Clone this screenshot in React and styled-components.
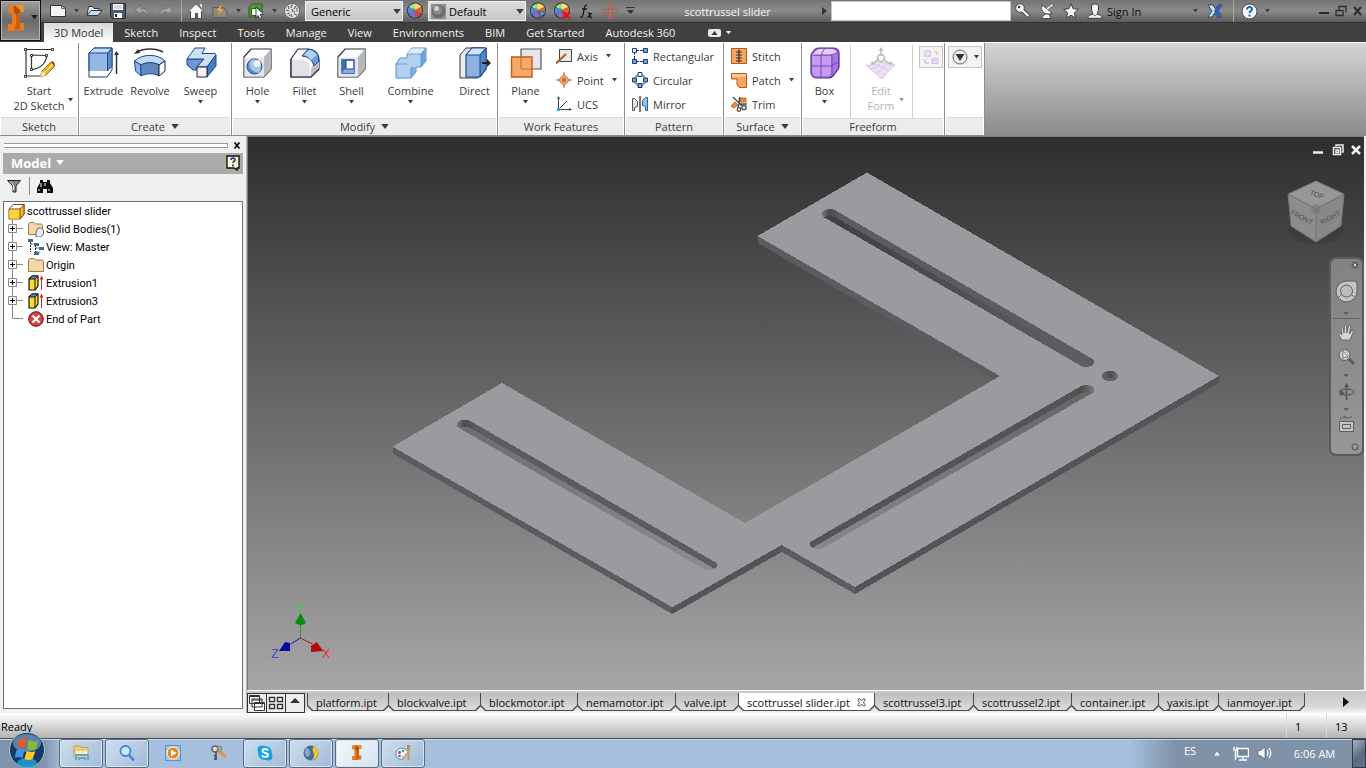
import React, {useState} from 'react'
import styled, {createGlobalStyle, css} from 'styled-components'

const GlobalStyle = createGlobalStyle`
	* { box-sizing: border-box; }
	body{
		margin: 0;
		background: #f0f0f0;
	}
	body, button, input, select{
		font-family: "Open Sans", "Noto Sans", sans-serif;
		font-size: 11px;
	}
	button{
		border: none;
		background: none;
		padding: 0;
		color: inherit;
	}
	svg{
		display: block;
		flex: none;
	}
`

const Page = styled.div`
	min-height: 100vh;
	display: flex;
	flex-direction: column;
`

/* ---------- header ---------- */

const Header = styled.header`
	display: grid;
	grid-template-columns: 41px 1fr;
	background: #404040;
`

const AppButton = styled.button`
	display: flex;
	align-items: center;
	justify-content: center;
	gap: 6px;
	height: 41px;
	padding: 0 0 6px 4px;
	background: linear-gradient(#a0a0a0, #6a6a6a 50%, #8c8c8c);
	border: 1px solid #111;
	box-shadow: inset 0 0 0 1px #b4b4b4;
`

const TitleBar = styled.div`
	height: 23px;
	display: flex;
	align-items: center;
	background: linear-gradient(#747474, #8a8a8a 50%, #5c5c5c);
	border-bottom: 1px solid #333;
`

const Tool = styled.button`
	width: ${p => p.$w || 24}px;
	height: 22px;
	flex: none;
	display: flex;
	align-items: center;
	justify-content: center;
`

const Spacer = styled.span`
	width: ${p => p.$w}px;
	flex: none;
`

const Divider = styled.span`
	width: ${p => p.$w || 6}px;
	height: 22px;
	flex: none;
	background: linear-gradient(#a5a5a5, #a5a5a5) no-repeat center / 1px 100%;
`

const PickBox = styled.label`
	width: 98px;
	height: 20px;
	margin-left: 1px;
	flex: none;
	display: flex;
	align-items: center;
	padding: 0 1px 0 2px;
	background: linear-gradient(#dcdcdc, #c6c6c6);
	border: 1px solid #efefef;
	select{
		flex: 1;
		min-width: 0;
		appearance: none;
		border: none;
		background: none;
		padding: 0 3px;
		color: #000;
	}
`

const DocTitle = styled.h1`
	flex: 1;
	margin: 0;
	text-align: center;
	font-size: 11px;
	font-weight: 400;
	color: #f4f4f4;
	white-space: nowrap;
`

const Search = styled.input`
	width: 180px;
	height: 20px;
	flex: none;
	border: 1px solid #b8c4d0;
	background: #fff;
	padding: 0 4px;
`

const SignIn = styled.button`
	width: 82px;
	text-align: left;
	color: #0c0c0c;
`

const WindowButtons = styled.div`
	display: flex;
	margin-left: 42px;
`

const MenuBar = styled.nav`
	height: 19px;
	display: flex;
	align-items: stretch;
	gap: 1px;
	padding-left: 3px;
`

const MenuTab = styled.button`
	padding: 0 10px;
	line-height: 18px;
	white-space: nowrap;
	color: #f2f2f2;
	${p => p.$active && css`
		background: linear-gradient(#d8d8d8, #fff);
		color: #333;
	`}
`

const MenuEnd = styled.button`
	display: flex;
	align-items: center;
	gap: 5px;
	padding-left: 22px;
`

/* ---------- ribbon ---------- */

const Ribbon = styled.section`
	display: flex;
	height: 94px;
	background: linear-gradient(#d4d4d4, #8b8b8b);
	border-top: 1px solid #fff;
	border-bottom: 1px solid #8a8a8a;
`

const Panel = styled.div`
	width: ${p => p.$w}px;
	flex: none;
	display: flex;
	flex-direction: column;
	background: #fff;
	border-right: 1px solid #8e8e8e;
`

const PanelBody = styled.div`
	flex: 1;
	display: flex;
	align-items: flex-start;
	padding: 2px 0 0 ${p => p.$pad || 0}px;
`

const PanelTitle = styled.div`
	height: 18px;
	margin: 0 1px;
	display: flex;
	align-items: center;
	justify-content: center;
	gap: 6px;
	background: #ececec;
	border-top: 1px solid #dadada;
	color: #3c3c3c;
	padding-bottom: 1px;
`

const BigTool = styled.button`
	width: ${p => p.$w}px;
	flex: none;
	display: flex;
	flex-direction: column;
	align-items: center;
	color: ${p => p.$off ? '#b4b4b4' : '#3a3a3a'};
	line-height: 15px;
	padding-top: 2px;
	white-space: nowrap;
	position: relative;
	> svg + span { margin-top: 4px; }
	> span + svg { margin-top: 2px; }
`

const SideCaret = styled.i`
	position: absolute;
	right: 5px;
	top: 53px;
`

const Rule = styled.span`
	width: 1px;
	height: 73px;
	margin: 0 ${p => p.$r}px 0 ${p => p.$l}px;
	background: #d0d0d0;
`

const SmallTools = styled.div`
	display: flex;
	flex-direction: column;
	align-items: flex-start;
	margin-left: ${p => p.$l}px;
`

const SmallTool = styled.button`
	height: 24px;
	display: flex;
	align-items: center;
	gap: 5px;
	padding-bottom: 2px;
	color: #3a3a3a;
	> span + svg { margin-left: 3px; }
`

const BoxedTool = styled.button`
	width: ${p => p.$w}px;
	height: 22px;
	margin: 1px 0 0 ${p => p.$l}px;
	display: flex;
	align-items: center;
	justify-content: center;
	gap: 6px;
	background: #f3f3f3;
	border: 1px solid #c4c4c4;
`

/* ---------- browser panel ---------- */

const Workspace = styled.main`
	flex: 1;
	display: flex;
	min-height: 0;
`

const Browser = styled.aside`
	width: 247px;
	flex: none;
	display: flex;
	flex-direction: column;
	padding: 0 3px 4px;
	background: #f0f0f0;
	border-right: 1px solid #b8b8b8;
`

const Grip = styled.div`
	height: 17px;
	display: flex;
	align-items: center;
	gap: 5px;
	padding: 2px 1px 0;
	span{
		flex: 1;
		height: 5px;
		border: solid #999;
		border-width: 1px 1px 1px 0;
		background: #fff;
	}
`

const BrowserHead = styled.div`
	width: 240px;
	height: 21px;
	display: flex;
	align-items: center;
	background: #ababab;
	color: #fff;
	padding: 0 3px 2px 8px;
	h2{
		margin: 0 5px 0 0;
		font-size: 13px;
		font-weight: 700;
	}
	> :last-child { margin-left: auto; }
`

const BrowserTools = styled.div`
	height: 27px;
	display: flex;
	align-items: center;
	gap: 7px;
	padding: 0 3px 3px;
`

const ToolRule = styled.span`
	width: 1px;
	height: 18px;
	background: #8c8c8c;
`

const Tree = styled.ul`
	flex: 1;
	width: 240px;
	margin: 0;
	padding: 0 0 0 4px;
	list-style: none;
	background: #fff;
	border: 1px solid #6e6e6e;
`

const Node = styled.li`
	height: 18px;
	display: flex;
	align-items: center;
	gap: 2px;
	white-space: nowrap;
	font-family: Roboto, "Open Sans", sans-serif;
	color: #000;
`

/* ---------- viewport ---------- */

const Stage = styled.section`
	flex: 1;
	min-width: 0;
	display: flex;
	flex-direction: column;
`

const Viewport = styled.div`
	flex: 1;
	position: relative;
	border: solid #7c7c7c;
	border-width: 1px 0 0 1px;
	margin-right: 2px;
	background: linear-gradient(#2e2e2e, #a6a6a6);
	> svg { width: 100%; height: 100%; }
`

const Overlay = styled.div`
	position: absolute;
	top: ${p => p.$top}px;
	right: ${p => p.$right}px;
	display: flex;
`

const NavBar = styled.div`
	position: absolute;
	top: 120px;
	right: 0;
	width: 35px;
	height: 199px;
	border: 2px solid #5a5a5a;
	border-radius: 7px;
	background: linear-gradient(#828282, #979797);
	display: flex;
	justify-content: center;
`

const DocTabs = styled.div`
	height: 23px;
	display: flex;
	align-items: flex-start;
	padding: 2px 0 0;
	background: linear-gradient(#c8c8c8, #d8d8d8 70%, #f4f4f4);
	border-top: 1px solid #fff;
`

const ViewButton = styled.button`
	width: 20px;
	height: 20px;
	margin-right: -1px;
	flex: none;
	display: flex;
	align-items: center;
	justify-content: center;
	background: #ececec;
	border: 1px solid #333;
`

const chamfer = 'polygon(0 0, 100% 0, 100% calc(100% - 5px), calc(100% - 5px) 100%, 5px 100%, 0 calc(100% - 5px))'

const DocTab = styled.button`
	position: relative;
	height: 18px;
	width: ${p => p.$w}px;
	padding: 0 9px;
	flex: none;
	white-space: nowrap;
	color: #111;
	background: #4c4c4c;
	clip-path: ${chamfer};
	margin-right: -1px;
	display: flex;
	align-items: center;
	justify-content: space-between;
	&::before{
		content: '';
		position: absolute;
		inset: 0 1px 1px;
		clip-path: ${chamfer};
		background: ${p => p.$active ? '#fff' : 'linear-gradient(#bdbdbd, #dcdcdc)'};
	}
	> * { position: relative; }
`

const TabScroll = styled.button`
	margin-left: auto;
	width: 40px;
	height: 18px;
	display: flex;
	align-items: center;
	justify-content: center;
`

/* ---------- bottom bars ---------- */

const StatusBar = styled.footer`
	height: 25px;
	display: flex;
	align-items: stretch;
	line-height: 27px;
	padding-left: 1px;
	color: #000;
	background: linear-gradient(#fff, #b2b2b2);
	span:first-child { flex: 1; }
`

const StatusCell = styled.span`
	width: 40px;
	padding-left: 8px;
	border-left: 1px solid #d8d8d8;
`

const TaskBar = styled.footer`
	height: 30px;
	display: flex;
	align-items: stretch;
	border-top: 1px solid #44525f;
	background: linear-gradient(90deg, #7f93ab 44px, #a5bfdc 62px, #a5bfdc calc(100% - 236px), #8092a8 calc(100% - 190px));
	box-shadow: inset 0 1px 0 #c9d8e8;
`

const StartButton = styled.button`
	width: 59px;
	padding-left: 9px;
	display: flex;
	align-items: flex-end;
	svg { margin-top: -6px; }
`

const TaskButton = styled.button`
	width: 44px;
	height: 29px;
	margin-right: 2px;
	padding-bottom: 2px;
	display: flex;
	align-items: center;
	justify-content: center;
	border-radius: 3px;
	${p => p.$open && css`
		border: 1px solid #566c85;
		box-shadow: inset 0 0 0 1px #d9e5f1;
		background: linear-gradient(135deg, #cfdeed, #a2bbd8);
	`}
	${p => p.$active && css`
		background: linear-gradient(135deg, #f4f8fb, #d4e2f0);
	`}
`

const Tray = styled.div`
	margin-left: auto;
	display: flex;
	align-items: center;
	padding-bottom: 1px;
	color: #fff;
`

const TrayText = styled.span`
	width: ${p => p.$w}px;
	text-align: center;
	${p => p.$up && css`padding-bottom: 6px;`}
`

const ShowDesktop = styled.button`
	width: 14px;
	height: 29px;
	border: 1px solid #2c3a49;
	background: linear-gradient(135deg, #a5b4c4, #56697e 60%, #66798f);
`

/* ---------- icons ---------- */

const Ico = ({w = 16, h = w, vb, children}) => (
	<svg width={w} height={h} viewBox={vb || `0 0 ${w} ${h}`} fill='none' aria-hidden='true'>{children}</svg>
)

const Caret = ({w = 5, c = '#3c3c3c'}) => (
	<Ico w={w} h={w / 2 + 1} vb='0 0 6 4'><path d='M0 0h6L3 4z' fill={c} /></Ico>
)

const Wheel = ({extra}) => (
	<Ico w={18} h={18}>
		<circle cx='9' cy='8.5' r='8' fill='#1c2130' />
		<path d='M9 8.5L9 1.2A7.3 7.3 0 0 1 15.3 4.9z' fill='#f0c530' />
		<path d='M9 8.5L15.3 4.9A7.3 7.3 0 0 1 15.3 12.1z' fill='#e0632b' />
		<path d='M9 8.5L15.3 12.1A7.3 7.3 0 0 1 9 15.8z' fill='#c94458' />
		<path d='M9 8.5V15.8A7.3 7.3 0 0 1 2.7 12.1z' fill='#7f70cf' />
		<path d='M9 8.5L2.7 12.1A7.3 7.3 0 0 1 2.7 4.9z' fill='#4d8fd6' />
		<path d='M9 8.5L2.7 4.9A7.3 7.3 0 0 1 9 1.2z' fill='#6fb850' />
		<path d='M3 5Q9 -1 15 5Q9 8 3 5' fill='#fff' opacity='.45' />
		{extra}
	</Ico>
)

const Letter = ({s = 26}) => (
	<Ico w={Math.round(s * .65)} h={s} vb='0 0 17 26'>
		<path d='M0 1l6-1h10v7h-4v11h4v7l-10 1H0v-7h4V8H0z' fill='#ea7a1e' />
		<path d='M6 0h10v7H6z' fill='#f08c30' />
		<path d='M8 7h4v11l-4 2z' fill='#c4620f' />
		<path d='M6 0l6 5v2l-4 3-2-3z' fill='#a3500e' />
		<path d='M8 19l4-1v6l-6 2z' fill='#c4620f' />
	</Ico>
)

const NewIcon = () => <Ico><path d='M.5 2.5h11l4 3v8H.5z' fill='#f4f4f4' stroke='#333' /><path d='M11.5 2.5v3h4' stroke='#666' /></Ico>
const OpenIcon = () => <Ico w={17} h={16}><path d='M1 12.5L2.5 3.5h4l1.5 2h5v2' fill='#e4ebf1' stroke='#333' /><path d='M1 12.5l4-5h11l-4 5z' fill='#c9d9e6' stroke='#2d3b48' /></Ico>
const SaveIcon = () => <Ico><path d='M.5.5h15v15h-13l-2-2z' fill='#4a5c6c' stroke='#222e38' /><path d='M3 1h10v6H3zM4 10h8v5H4z' fill='#fff' /><path d='M5 11h2v3H5z' fill='#222' /><path d='M4 3h8M4 5h8' stroke='#aab' /></Ico>
const UndoIcon = () => <Ico><path d='M1 7l6-5v3.5c5 0 8 2 7 8C12.5 9.5 11 9 7 9v3z' fill='#a4a4a4' stroke='#5e5e5e' strokeWidth='.6' /></Ico>
const RedoIcon = () => <Ico><path d='M15 7L9 2v3.5c-5 0-8 2-7 8C3.5 9.5 5 9 9 9v3z' fill='#a4a4a4' stroke='#5e5e5e' strokeWidth='.6' /></Ico>
const HomeIcon = () => <Ico><path d='M.5 8L8 .8 15.5 8l-1.2 1-.8-.7v7.2h-11V8.3L1.7 9z' fill='#fafafa' stroke='#333' strokeWidth='.8' /><path d='M7 10h3v5H7z' fill='#555' /><path d='M12 1h2v4l-2-2z' fill='#ddd' /></Ico>
const BoltIcon = () => <Ico><path d='M1 4.5h10l4 3v7H1z' fill='#8f8a84' stroke='#5a5a5a' /><path d='M11 0L3 8h4l-3 6 9-8H9z' fill='#d9ab63' stroke='#8f713f' strokeWidth='.7' /></Ico>
const CubeCursorIcon = () => <Ico><path d='M1 4l3-3h10v9l-3 4H1z' fill='#4f9a34' stroke='#2c5f1c' /><path d='M3.5 5.5h8v7h-8z' fill='#f4f8f2' stroke='#2c5f1c' /><path d='M8 4v11l2-2.5 2 3.5 2-1-2-3.5 3.5-.5z' fill='#fff' stroke='#222' strokeWidth='.8' /></Ico>
const SphereMesh = () => <Ico><circle cx='8' cy='8' r='7.5' fill='#e2e2e2' stroke='#444' strokeWidth='.6' /><path d='M4 3l1 3M8 1.5L7 5M12 3l-2 3M2 7l3 1M8 6l1 3M12 7l2 1M3 11l3-1M7 11l1 3M10 11l3 1M11 9.5l-1-1M5 13l1-1M13.5 5L12 5.5' stroke='#666' strokeWidth='1.3' /></Ico>
const BallIcon = () => <Ico w={15}><path d='M0 0h15v15H0z' fill='#8f8f8f' /><circle cx='7.5' cy='7.5' r='6.8' fill='#6d6d6d' /><circle cx='6.5' cy='6' r='4.5' fill='#8a8a8a' /><circle cx='5.5' cy='4.5' r='2.5' fill='#d0d0d0' /></Ico>
const PlusIcon = () => <Ico><path d='M6.5.5h3v6h6v3h-6v6h-3v-6h-6v-3h6z' fill='#92807c' stroke='#b8604f' strokeWidth='1.2' /></Ico>
const KeyIcon = () => <Ico><circle cx='5' cy='5' r='4.3' fill='#f5f5f5' stroke='#333' strokeWidth='.8' /><circle cx='4' cy='4' r='1.3' fill='#444' /><path d='M7.5 7.5l6.5 6' stroke='#333' strokeWidth='4' /><path d='M7 7l6.5 6.2' stroke='#f5f5f5' strokeWidth='2.4' /></Ico>
const DishIcon = () => <Ico><path d='M3 2c-2 7 4 11 10 8z' fill='#fff' stroke='#333' strokeWidth='.8' /><path d='M8 6l5-4' stroke='#fff' strokeWidth='1.5' /><circle cx='12.5' cy='2.5' r='1.5' fill='#fff' stroke='#333' strokeWidth='.5' /><path d='M6 11l-4 4.5h10l-2-4.5z' fill='#f2f2f2' stroke='#333' strokeWidth='.8' /></Ico>
const StarIcon = () => <Ico><path d='M8 .8l2.1 5 5.2.4-4 3.5 1.3 5.3L8 12.2 3.4 15l1.3-5.3-4-3.5 5.2-.4z' fill='#fafafa' stroke='#333' strokeWidth='.9' /></Ico>
const UserIcon = () => <Ico><path d='M1 15.3c0-3 2-3.3 5-4L4.5 7V4C4.5 0 11.5 0 11.5 4v3L10 11.3c3 .7 5 1 5 4z' fill='#f4f4f4' stroke='#333' strokeWidth='.9' /><path d='M5.5 11l2.5 2 2.5-2' stroke='#777' /></Ico>
const ExchangeIcon = () => <Ico><path d='M1 2h5l2.5 4L11 2h4l-4 6 4 6h-5L7.5 10 5 14H1l4-6z' fill='#cfe0f2' stroke='#1d3c6e' strokeWidth='.9' /><path d='M11 2h4l-4 6 4 6h-5L7 8z' fill='#2f62a8' /></Ico>
const HelpIcon = () => <Ico w={17}><circle cx='8.5' cy='8.5' r='7.5' fill='#f6f6f6' stroke='#444' /><path d='M6 6.5c0-3.5 5.5-3.2 5 0-.3 1.6-2.5 1.6-2.5 3.5M8.5 11.5v2' stroke='#1c64b8' strokeWidth='2' /></Ico>

const SketchIcon = () => (
	<Ico w={32}>
		<path d='M28 2.5H3V29h14M8.5 8v14.5C17 22 23.5 16 23.5 8.5z' stroke='#333' strokeWidth='1.2' />
		<g fill='#fff' stroke='#333'><path d='M1.5 1.5h2v2h-2zM28.5 1.5h2v2h-2zM1.5 28.5h2v2h-2zM7.5 7.5h2v2h-2zM22.5 7.5h2v2h-2zM7.5 21.5h2v2h-2z' /></g>
		<path d='M17 30l2-6 9-9 4 4-9 9z' fill='#f0b429' stroke='#7c5310' strokeWidth='.8' />
		<path d='M28 15l2-1 2 3-1 2z' fill='#c0392b' /><path d='M17 30l2-6 4 4z' fill='#f7e4c0' /><path d='M21 26l9-9' stroke='#fff3b0' />
	</Ico>
)
const ExtrudeIcon = () => (
	<Ico w={32}>
		<path d='M1 6l5-5h18v22l-5 7H1z' fill='#fff' stroke='#1b3461' />
		<path d='M1.5 6h18v18h-18z' fill='#93b8e2' /><path d='M1.5 6L6 1.5h17.5L19.5 6z' fill='#c6dbf2' /><path d='M19.5 6l4-4.5V19l-4 5z' fill='#5f88be' />
		<path d='M1 24V6l5-5h18v18l-4.5 5V6M1 6h18.5L24 1' stroke='#1846a0' />
		<path d='M28.5 27V5' stroke='#333' strokeWidth='1.5' /><path d='M26 8l2.5-4L31 8z' fill='#333' />
	</Ico>
)
const RevolveIcon = () => (
	<Ico w={32}>
		<path d='M29 5C22 1 10 1 3 5' stroke='#333' strokeWidth='1.5' /><path d='M0 7l4-5 2 4z' fill='#333' />
		<path d='M.5 14C8 6.5 24 6.5 31 14l-6 4c-5-3-13-3-18 0z' fill='#c3daf2' stroke='#1846a0' />
		<path d='M.5 14L7 18v11L1.5 24z' fill='#8fb2dc' stroke='#1846a0' />
		<path d='M7 18c5-3 13-3 18 0v11c-5-3-13-3-18 0z' fill='#6189bf' stroke='#1846a0' />
		<path d='M25 18l6-4v10l-6 5z' fill='#fff' stroke='#222' />
	</Ico>
)
const SweepIcon = () => (
	<Ico w={32}>
		<path d='M2 12h17l-7 8v3H8l-6-5z' fill='#6f97cb' stroke='#1846a0' />
		<path d='M10 1h10l-3 5.5h13L31 8 22 20H12l7-8H2z' fill='#cfe0f4' stroke='#1846a0' />
		<path d='M31 8v11l-9 11V20z' fill='#4f7ab4' stroke='#1846a0' />
		<path d='M12 20h10v10H12z' fill='#f2f2f2' stroke='#223' />
	</Ico>
)
const Block = ({children}) => (
	<Ico w={32}>
		<path d='M2 10l7-8h20v20l-7 8H2z' fill='#fff' stroke='#2a3140' strokeWidth='1.2' />
		<path d='M2.5 10.5H22v19H2.5z' fill='#e6e6e6' /><path d='M22 10l7-8v20l-7 8z' fill='#b8b8bb' />
		{children}
	</Ico>
)
const HoleIcon = () => <Block><circle cx='12.5' cy='19.5' r='7.5' fill='#5f8cc6' stroke='#1846a0' /><path d='M8 14c-2 6 2 11 8 12 5-3 4-11-1-13-3-1-5-.5-7 1' fill='#a3c5ea' /><circle cx='15' cy='16.5' r='3.5' fill='#eef5fc' /></Block>
const FilletIcon = () => (
	<Ico w={32}>
		<path d='M2 12L9 2h10q11 1 11 12v8l-8 8H2z' fill='#fff' stroke='#2a3140' strokeWidth='1.2' />
		<path d='M2.5 12.5H11Q21.5 13 21.5 23v6.500h-19z' fill='#e3e3e3' />
		<path d='M24 18l6-5v9l-8 8v-8z' fill='#c0c0c4' />
		<path d='M13 9l6-7q11 1 11 12l-5 5q-2-9-12-10z' fill='#6f9cd8' stroke='#1846a0' /><path d='M15 8l5-5q5 .5 8 5l-6 5q-3-4-7-5z' fill='#b4d0ef' />
		<path d='M2 12V30H22l8-8' stroke='#2a3140' strokeWidth='1.2' />
	</Ico>
)
const ShellIcon = () => <Block><path d='M6 13h12v13H6z' fill='#fff' stroke='#1846a0' strokeWidth='1.3' /><path d='M6 13h4v9l-4 4z' fill='#456fad' /><path d='M10 22h8v4H6z' fill='#85aee0' /><path d='M10 13v9h8' stroke='#1846a0' /></Block>
const CombineIcon = () => (
	<Ico w={32}>
		<path d='M1 17l4-6h7V7l5-6h14v13l-5 6h-5v5l-5 6H1z' fill='#b2d0f0' stroke='#5b8fcd' />
		<path d='M26 7l4.5-5.5V14L26 19.5z' fill='#6f9ed8' /><path d='M12 7l5-5.5h13L26 7z' fill='#ddecfa' /><path d='M16 20h5v5l-5 5.5z' fill='#7fa9dc' />
		<path d='M12 7h14v13M26 7l5-6M1 17h11M16 20v11' stroke='#5b8fcd' strokeWidth='.8' />
	</Ico>
)
const DirectIcon = () => (
	<Ico w={32}>
		<path d='M1 8l6-7h18v22l-6 8H1z' fill='#e8edf4' stroke='#333' />
		<path d='M7 8l6-7h14v21l-6 8H7z' fill='#8db2e0' stroke='#1846a0' strokeWidth='1.2' /><path d='M7 8l6-7h14l-6 7z' fill='#d3e4f6' stroke='#1846a0' /><path d='M21 8l6-7v21l-6 8z' fill='#5d87bf' stroke='#1846a0' />
		<path d='M23 16h6' stroke='#222' strokeWidth='2' /><path d='M28 12l4 4-4 4z' fill='#222' />
	</Ico>
)
const PlaneIcon = () => (
	<Ico w={32}>
		<path d='M11 2h20v20H11z' fill='#e6e6ea' stroke='#555' strokeWidth='1.2' />
		<path d='M1.5 10H22v20H1.5z' fill='#f9a866' stroke='#c15a15' strokeWidth='1.4' /><path d='M11 10v12h11' stroke='#9b7a62' />
	</Ico>
)
const BoxIcon = () => (
	<Ico w={32}>
		<path d='M10 1h14q6 0 6 5v14q0 2-3 5l-3 4q-2 2-5 2H8q-5 0-6-5V9q0-3 2-4 2-4 6-4z' fill='#a873e4' stroke='#4c2a86' strokeWidth='1.2' />
		<path d='M4 8q2-5 7-6h12q4 1 5 4-3 2-5 2H4z' fill='#e3cdfa' /><path d='M3 9h19v16q0 4-4 4H8q-5 0-5-4z' fill='#c49af4' />
		<path d='M12 30V10q0-4 4-9M3 19h19l7-4M23 8v20M5 8h16q6-1 8-3' stroke='#6a45a8' strokeWidth='.9' />
	</Ico>
)
const EditFormIcon = () => (
	<Ico w={32}>
		<path d='M1 18q6 2 10-5 8 3 16 3l3 2q-6 4-13 14Q10 26 1 18z' fill='#ecdff8' stroke='#d6c6e6' /><path d='M6 22q7-1 12-8M11 27q6-3 11-11M5 15q9 3 18 9' stroke='#d6c6e6' />
		<circle cx='16' cy='11' r='3.5' stroke='#bbb' strokeWidth='1.5' fill='#fff' /><path d='M16 1v8M14 12l-6 5M18 12l7 5' stroke='#bbb' strokeWidth='1.4' /><path d='M13.5 4L16 0l2.500 4zM6 18l1-4 3 3zM27 18l-1-4-3 3z' fill='#bbb' />
	</Ico>
)

const AxisIcon = () => <Ico><path d='M3.5 1.5h12v12h-12z' fill='#e8e8ea' stroke='#444' /><path d='M0 15.5L10 6' stroke='#b85a1e' strokeWidth='2' /></Ico>
const PointIcon = () => <Ico><path d='M8 0v16M0 8h16' stroke='#b8561c' /><path d='M8 2.5L13.5 8 8 13.5 2.5 8z' fill='#f8b57c' stroke='#b8561c' /><circle cx='8' cy='8' r='2' fill='#fff' stroke='#b8561c' /><circle cx='8' cy='8' r='.9' fill='#333' /></Ico>
const UcsIcon = () => <Ico><path d='M2.5 1v12.5H15M2.5 13.5L11 5' stroke='#444' /><path d='M1 3l1.5-3L4 3zM13 12l3 1.5-3 1.5z' fill='#444' /><path d='M1 12h3v3H1z' fill='#2ca0dc' /></Ico>
const RectIcon = () => <Ico><path d='M4 2.5h8M2.5 4v8M4 13.5h8' stroke='#333' strokeDasharray='3 1' /><path d='M.5.5h4v4h-4z' fill='#fff' stroke='#1b3a85' /><path d='M11.5.5h4v4h-4zM.5 11.5h4v4h-4zM11.5 11.5h4v4h-4z' fill='#6da4e0' stroke='#1b3a85' /></Ico>
const CircIcon = () => <Ico><circle cx='8' cy='8' r='5.5' stroke='#333' /><path d='M6 .5h4v4H6z' fill='#fff' stroke='#1b3a85' /><path d='M.5 6h4v4h-4zM11.5 6h4v4h-4zM6 11.5h4v4H6z' fill='#6da4e0' stroke='#1b3a85' /></Ico>
const MirrorIcon = () => <Ico><path d='M.5 2.5h2l3 3v5l-3 1v3h-2z' fill='#e6e6e6' stroke='#555' /><path d='M15.5 1.5h-2l-3 3v5l3 1v4h2z' fill='#8fc6ea' stroke='#1c6ba6' /><path d='M8 0v16' stroke='#222' strokeWidth='1.2' /></Ico>
const StitchIcon = () => <Ico><path d='M.5.5h15v15H.5z' fill='#f8a55e' stroke='#b8561c' /><path d='M8 .5v15' stroke='#b8561c' /><path d='M5 4h6M5 7h6M5 10h6M5 13h6M8 2v12' stroke='#333' /></Ico>
const PatchIcon = () => <Ico><path d='M.5 1.5h15v14H8l-2-3V7H.5z' fill='#f8a55e' stroke='#b8561c' /><path d='M1 2h14v3H1z' fill='#fbc797' /></Ico>
const TrimIcon = () => <Ico><path d='M0 10l4-4 3 3-4 3zM8 6V2h7v4z' fill='#f0873a' stroke='#b8561c' strokeWidth='.8' /><path d='M2 1l9 9M9 1L8 8l-1 4M9 8h7' stroke='#4c4c54' strokeWidth='1.3' /><circle cx='13' cy='11.5' r='2.2' fill='#fff' stroke='#4c4c54' strokeWidth='1.3' /><circle cx='8' cy='13.5' r='1.8' fill='#fff' stroke='#4c4c54' strokeWidth='1.3' /></Ico>
const ConvertIcon = () => <Ico><g stroke='#d3bfe8'><circle cx='4.5' cy='4.5' r='3.5' /><path d='M1 3.5h7M1 6h7' /><path d='M9 9.5h6v5H9zM9 11q3 2 6 0' fill='#ecdff8' /></g><path d='M14 6V3h-3M2 10v4h4' stroke='#bbb' /></Ico>
const DownDisc = () => <Ico><circle cx='8' cy='8' r='7' fill='#eee' stroke='#666' /><path d='M3.5 5h9L8 12z' fill='#333' /></Ico>

/* ---------- tree icons ---------- */

const PartIcon = () => <Ico w={17}><path d='M1 6l4-4.5h11V11l-4 5H1z' fill='#fff' stroke='#8f3a10' /><path d='M1.5 6.5h10v9h-10z' fill='#fbd92c' /><path d='M12 6l4-4.5V11l-4 5z' fill='#f0c41f' stroke='#8f3a10' /><path d='M1 6h11' stroke='#8f3a10' /></Ico>
const FolderIcon = () => <Ico><path d='M.5 14.5V3L2 1.5h4L7.5 3h7l1 1.5v10z' fill='#f3d9a6' stroke='#9c7a48' /></Ico>
const BodiesIcon = () => <Ico><path d='M.5 13.5V3L2 1.5h4L7.5 3h6l1 1.5v9z' fill='#f3d9a6' stroke='#9c7a48' /><path d='M10 7h3.5l2 2v4l-3 3H8v-5z' fill='#e8ecf0' stroke='#666' /></Ico>
const ViewIcon = () => <Ico><path d='M2.5 3v10M2.5 5h5M7.5 6v8M7.5 9h4M7.5 13h4' stroke='#222' strokeDasharray='2 1' /><path d='M0 0h5v3H0zM6 4h5v3H6zM11 8h5v3h-5zM6 13h5v3H6z' fill='#3c6d92' /></Ico>
const ExtrusionIcon = () => <Ico><path d='M1 4l3-3h6v10l-3 4H1z' fill='#fbdc34' stroke='#111' strokeWidth='1.2' /><path d='M1 4l3-3h6L7 4z' fill='#5f90b8' stroke='#111' /><path d='M7 4v11' stroke='#111' /><path d='M13.5 15V3' stroke='#d22' /><path d='M11.5 4.5l2-4 2 4z' fill='#d22' /></Ico>
const EndIcon = () => <Ico><circle cx='8' cy='8' r='7.3' fill='#e23b3b' stroke='#551515' /><path d='M4.5 4.5l7 7M11.5 4.5l-7 7' stroke='#fff' strokeWidth='2.4' /></Ico>

const Branch = ({last}) => (
	<Ico w={18} h={18}>
		{last ? <path d='M4.5 0v8.5H15' stroke='#888' /> : <>
			<path d='M4.5 0v18M8 8.5h7' stroke='#888' />
			<path d='M.5 4.5h8v8h-8z' fill='#fff' stroke='#888' />
			<path d='M2 8.5h5M4.5 6v5' stroke='#000' />
		</>}
	</Ico>
)

const nodes = [
	['Solid Bodies(1)', BodiesIcon],
	['View: Master', ViewIcon],
	['Origin', FolderIcon],
	['Extrusion1', ExtrusionIcon],
	['Extrusion3', ExtrusionIcon],
	['End of Part', EndIcon],
]

/* ---------- part drawing ---------- */

// stadium in the top plane: two half ellipses joined by tangents, rising = slot goes up to the right
const slotPath = ([x1, y1], [x2, y2], rising) => {
	const dy = rising ? 3.4 : -3.4
	const sweep = rising ? 0 : 1
	return `M${x1 - 5.8} ${y1 - dy}` +
		`A8.2 4.8 0 0 ${sweep} ${x1 + 5.8} ${y1 + dy}` +
		`L${x2 + 5.8} ${y2 + dy}` +
		`A8.2 4.8 0 0 ${sweep} ${x2 - 5.8} ${y2 - dy}z`
}

const slots = [
	{d: slotPath([830, 214], [1086, 362], false), fill: 'url(#wallA)'},
	{d: slotPath([465, 424.7], [709, 565.3], false), fill: 'url(#wallB)'},
	{d: slotPath([818, 544.3], [1086, 390], true), fill: 'url(#wallC)'},
	{d: 'M1101.7 376a8.3 5.2 0 0 1 16.6 0a8.3 5.2 0 0 1-16.6 0z', fill: 'url(#wallD)'},
]

const outline = 'M867 172.5L1219 376L855 587L781.7 545L672.3 607.3L392.5 446.7L502 383L745 523L1000 376L757.5 236z'

const Grad = ({id, x1, x2, stops}) => (
	<linearGradient id={id} gradientUnits='userSpaceOnUse' x1={x1} x2={x2} y1='0' y2='0'>
		{stops.map(([o, c]) => <stop key={o} offset={o} stopColor={c} />)}
	</linearGradient>
)

const Part = () => (
	<svg viewBox='248 137 1116 553' preserveAspectRatio='xMidYMid meet' role='img' aria-label='scottrussel slider part' shapeRendering='crispEdges'>
		<defs>
			<Grad id='wallA' x1='822' x2='842' stops={[[0, '#77777b'], [.35, '#4c4c4c'], [1, '#5b5c61']]} />
			<Grad id='wallB' x1='457' x2='477' stops={[[0, '#77777b'], [.35, '#4c4c4c'], [1, '#5b5c61']]} />
			<Grad id='wallC' x1='1074' x2='1094' stops={[[0, '#53545a'], [.35, '#4c4c4c'], [1, '#77777b']]} />
			<Grad id='wallD' x1='1102' x2='1119' stops={[[0, '#66666a'], [.5, '#4c4c4c'], [1, '#77777b']]} />
			{slots.map((s, i) => (
				<mask key={i} id={`cut${i}`} maskUnits='userSpaceOnUse' x='248' y='137' width='1116' height='553'>
					<path d='M248 137h1116v553H248z' fill='#fff' />
					<path d={s.d} transform='translate(0 7)' fill='#000' />
				</mask>
			))}
		</defs>
		<path d='M757.5 236L1000 376L994 380L757.5 243zM392.5 446.7L672.3 607.3V614L392.5 453.5zM781.7 545L855 587V594L781.7 552z' fill='#5b5c61' />
		<path d='M672.3 607.3L781.7 545V552L672.3 614zM855 587L1219 376V383L855 594z' fill='#53535a' />
		<path d={outline + slots.map(s => s.d).join('')} fill='#9b9a9f' fillRule='evenodd' />
		{slots.map((s, i) => <path key={i} d={s.d} fill={s.fill} mask={`url(#cut${i})`} />)}
		<g shapeRendering='auto'>
			<path d='M300.5 638V622' stroke='#1ca01c' /><path d='M300.5 638l-10 6' stroke='#1414b4' /><path d='M300.5 638l12 6' stroke='#b41414' />
			<path d='M300.5 613l5.5 10q-5 4-11 0z' fill='#0c8c0c' /><path d='M279 651l6-9 5 1v8z' fill='#0a0aa8' /><path d='M323 651l-6-9-6 4v6z' fill='#b00c0c' />
			<g fontFamily='Liberation Sans, sans-serif' fontSize='12' textAnchor='middle'>
				<text x='300' y='612' fill='#2bd62b'>Y</text><text x='275' y='658' fill='#3a48e0'>Z</text><text x='326' y='658' fill='#ee2c2c'>X</text>
			</g>
		</g>
	</svg>
)

const ViewCube = () => (
	<Ico w={66} h={72}>
		<ellipse cx='33' cy='54' rx='28' ry='14' fill='#222' opacity='.2' />
		<path d='M33 5L61 18 33 33 5 18z' fill='#979797' /><path d='M5 18l28 15v33L8 50z' fill='#8d8d8d' /><path d='M61 18L33 33v33l25-16z' fill='#888' />
		<path d='M33 5L61 18 58 50 33 66 8 50 5 18zM5 18l28 15 28-15M33 33v33' stroke='#747474' /><circle cx='33' cy='33' r='5' fill='#777' opacity='.6' />
		<g fontFamily='Liberation Sans, sans-serif' fontSize='7' textAnchor='middle' fill='#505050'>
			<text x='34' y='21' transform='rotate(20 34 18)'>TOP</text>
			<text x='19' y='44' transform='rotate(28 19 41)'>FRONT</text>
			<text x='47' y='44' transform='rotate(-28 47 41)'>RIGHT</text>
		</g>
	</Ico>
)

const NavIcons = () => (
	<Ico w={31} h={195}>
		<circle cx='24' cy='6' r='3.5' fill='#606060' /><path d='M22.5 4.5l3 3M25.5 4.5l-3 3' stroke='#ddd' />
		<path d='M15 22h8q3 0 3 3v7a10.5 10.5 0 1 1-11-10z' fill='#c4c4c4' stroke='#5d5d5d' /><circle cx='15.5' cy='32' r='6' fill='#bcbcbc' stroke='#5d5d5d' /><path d='M8 38l3-3M23 38l-3-3' stroke='#5d5d5d' />
		<path d='M12 53h6l-3 3zM12 115h6l-3 3zM12 149h6l-3 3z' fill='#5d5d5d' /><path d='M2 59.5h27' stroke='#666' />
		<path d='M11 81l-3-5q-1-2 1-2l2 2-1-8q1-2 2 0l1 6 .5-8q1.5-1.5 2 0l.3 8 1.7-7q1.5-1 2 .5L18.5 75l2.5-4q1.5-.5 1.5 1L19 81z' fill='#d4d4d4' stroke='#5d5d5d' strokeWidth='.8' />
		<circle cx='13.5' cy='96' r='5.5' fill='#c9c9c9' stroke='#5d5d5d' /><path d='M18 100l5 5' stroke='#5d5d5d' strokeWidth='3' /><path d='M12 92v8l2-2 3 0z' fill='#eee' stroke='#555' strokeWidth='.7' />
		<path d='M15.5 126v15' stroke='#555' strokeWidth='1.5' /><ellipse cx='15.5' cy='133' rx='7' ry='3' stroke='#5d5d5d' strokeWidth='1.3' /><path d='M13 128l2.5-4 2.5 4zM9 131v6l5-3z' fill='#555' />
		<path d='M8.5 162.5h14v10h-14z' fill='#c4c4c4' stroke='#5d5d5d' /><path d='M11.5 165.5h8v4h-8z' stroke='#5d5d5d' /><path d='M9 160l5-3v2l7-1' stroke='#5d5d5d' />
		<circle cx='24' cy='188' r='3.5' fill='#606060' /><path d='M22 187h4M22.5 189h3' stroke='#ddd' />
	</Ico>
)

/* ---------- taskbar icons ---------- */

const Orb = () => (
	<Ico w={36}>
		<circle cx='18' cy='18' r='17.5' fill='#143a63' stroke='#a9c2d8' /><ellipse cx='18' cy='11' rx='14' ry='9' fill='#6d95b8' opacity='.8' /><ellipse cx='18' cy='31' rx='10' ry='5' fill='#1fa6dc' opacity='.8' />
		<path d='M10 8q5-3 8-1l-2 9q-4-2-8 0z' fill='#e35a20' /><path d='M20 8q5 3 9 1l-2 8q-5 2-9 0z' fill='#84bd35' />
		<path d='M7.5 18q4-2 8 0l-2 8q-4-2-8 0z' fill='#3f96dd' /><path d='M17.5 19q5 2 9 0l-3 8q-4 2-8 0z' fill='#fcc928' />
	</Ico>
)
const ExplorerIcon = () => <Ico w={17}><path d='M1 2h6l1 1.5h7V13H1z' fill='#ecd07e' stroke='#c29c45' /><path d='M2 6h13v7H2z' fill='#fbeeb4' stroke='#d9b964' /><path d='M3 16v-5h12v5M6 16v-2h6v2' stroke='#5aa6dc' strokeWidth='1.8' /></Ico>
const FindIcon = () => <Ico><circle cx='6.5' cy='6' r='5' fill='#cde4fa' stroke='#3f86dc' strokeWidth='1.8' /><path d='M10 10l5 5.5' stroke='#3f86dc' strokeWidth='2.6' /></Ico>
const MediaIcon = () => <Ico><path d='M.5.5h15v15H.5z' fill='#9ccbe8' stroke='#5794c2' /><circle cx='8' cy='8' r='6' fill='#f08319' stroke='#fff' /><path d='M6 4.5l5.5 3.5L6 11.5z' fill='#fff' /></Ico>
const KeysIcon = () => <Ico><circle cx='4' cy='4' r='3' fill='#ddd' stroke='#666' strokeWidth='1.5' /><path d='M5 7v8M5 11H3M5 14H3' stroke='#555' strokeWidth='1.8' /><circle cx='8.5' cy='3.5' r='2' stroke='#888' strokeWidth='1.5' /><path d='M8 6l7 6' stroke='#d99c3c' strokeWidth='3' /></Ico>
const SkypeIcon = () => <Ico><circle cx='8' cy='8' r='7' fill='#10a5e4' /><circle cx='4.5' cy='4.5' r='4' fill='#10a5e4' /><circle cx='11.5' cy='11.5' r='4' fill='#10a5e4' /><path d='M11 5.5C10 3.5 5.5 3.5 5.5 6c0 2.5 5.5 1.5 5.5 4s-5 2.5-6 .3' stroke='#fff' strokeWidth='1.9' /></Ico>
const GlobeIcon = () => <Ico><circle cx='8' cy='8' r='7.5' fill='#4a6c9c' /><path d='M3 3q3 0 4 4t-3 5Q0 8 3 3z' fill='#8fa6c4' /><path d='M11 1q5 3 4 8t-7 6.5q4-3 3-7-3-4 0-7.5z' fill='#f2c81e' /></Ico>
const PaintIcon = () => <Ico><path d='M1 9c0-5 5-7 9-5s3 4 1 5 1 4-3 5-7-1-7-5z' fill='#eef6fc' stroke='#4c8cbc' /><circle cx='4.5' cy='7.5' r='1.4' fill='#e0342c' /><circle cx='8' cy='6' r='1.3' fill='#3bb04a' /><circle cx='4.5' cy='11' r='1.3' fill='#3b6fd0' /><circle cx='8' cy='12' r='1.2' fill='#f0b92c' /><path d='M13.5 3v12' stroke='#e0962c' strokeWidth='2' /><path d='M12 5V0h3v5z' fill='#c28a50' /></Ico>

const taskItems = [
	['Explorer', ExplorerIcon, true], ['Search', FindIcon, true], ['Media Player', MediaIcon], ['Keys', KeysIcon],
	['Skype', SkypeIcon, true], ['Browser', GlobeIcon, true], ['Inventor', () => <Letter s={15} />, true], ['Paint', PaintIcon, true],
]

const docs = [
	['platform.ipt', 82], ['blockvalve.ipt', 93], ['blockmotor.ipt', 98], ['nemamotor.ipt', 99], ['valve.ipt', 64],
	['scottrussel slider.ipt', 137], ['scottrussel3.ipt', 100], ['scottrussel2.ipt', 99], ['container.ipt', 88], ['yaxis.ipt', 61], ['ianmoyer.ipt', 87],
]

const menus = ['3D Model', 'Sketch', 'Inspect', 'Tools', 'Manage', 'View', 'Environments', 'BIM', 'Get Started', 'Autodesk 360']

const Big = ({w, icon, label, second, caret, off, side}) => (
	<BigTool $w={w} $off={off} disabled={off}>
		{icon}
		<span>{label}{second && <><br />{second}</>}</span>
		{caret && <Caret />}
		{side && <SideCaret><Caret c={off ? '#999' : '#3c3c3c'} /></SideCaret>}
	</BigTool>
)

const Small = ({icon, label, caret}) => (
	<SmallTool>{icon}<span>{label}</span>{caret && <Caret />}</SmallTool>
)

const App = () => {
	const [menu, setMenu] = useState('3D Model')
	const [doc, setDoc] = useState('scottrussel slider.ipt')

	return <Page>
		<GlobalStyle />
		<Header>
			<AppButton aria-label='Application menu'><Letter /><Caret c='#222' w={7} /></AppButton>
			<div>
				<TitleBar>
					<Spacer $w={5} />
					<Tool aria-label='New'><NewIcon /></Tool>
					<Tool $w={12} aria-label='New options'><Caret /></Tool>
					<Tool aria-label='Open'><OpenIcon /></Tool>
					<Tool aria-label='Save'><SaveIcon /></Tool>
					<Tool aria-label='Undo'><UndoIcon /></Tool>
					<Tool aria-label='Redo'><RedoIcon /></Tool>
					<Divider />
					<Tool aria-label='Home'><HomeIcon /></Tool>
					<Tool aria-label='Update'><BoltIcon /></Tool>
					<Tool $w={12} aria-label='Update options'><Caret /></Tool>
					<Tool aria-label='Select'><CubeCursorIcon /></Tool>
					<Tool $w={12} aria-label='Select options'><Caret /></Tool>
					<Tool aria-label='Material'><SphereMesh /></Tool>
					<PickBox>
						<select aria-label='Material'><option>Generic</option></select><Caret w={8} />
					</PickBox>
					<Tool aria-label='Appearance'><Wheel /></Tool>
					<PickBox>
						<BallIcon /><select aria-label='Appearance'><option>Default</option></select><Caret w={8} />
					</PickBox>
					<Tool aria-label='Adjust'><Wheel extra={<path d='M9 10h8l-4 4zM13 13v3M10 17h7' fill='#35b3e6' stroke='#1a6f96' />} /></Tool>
					<Tool aria-label='Clear'><Wheel extra={<path d='M10 10l7 7M17 10l-7 7' stroke='#d41818' strokeWidth='2' />} /></Tool>
					<Tool aria-label='Parameters'>
						<Ico><path d='M9 2.5q-2-1-2.5 2L5 12q-.5 3-3 2M4 6h5M10 10q2 0 2 2.5t2 2M14 10l-4.5 4.5' stroke='#1a1a1a' strokeWidth='1.3' /></Ico>
					</Tool>
					<Tool aria-label='Add'><PlusIcon /></Tool>
					<Tool $w={16} aria-label='Customize'><Ico w={9} h={8}><path d='M0 .5h9' stroke='#333' /><path d='M1 3h7L4.5 7z' fill='#333' /></Ico></Tool>
					<DocTitle>scottrussel slider</DocTitle>
					<Tool $w={14} aria-label='Expand'><Ico w={5} h={8}><path d='M0 0l5 4-5 4z' fill='#333' /></Ico></Tool>
					<Search aria-label='Search help' />
					<Tool aria-label='Subscription'><KeyIcon /></Tool>
					<Tool aria-label='Communication'><DishIcon /></Tool>
					<Tool aria-label='Favorites'><StarIcon /></Tool>
					<Tool aria-label='Account'><UserIcon /></Tool>
					<SignIn>Sign In</SignIn>
					<Tool $w={12} aria-label='Account options'><Caret /></Tool>
					<Tool $w={28} aria-label='Exchange'><ExchangeIcon /></Tool>
					<Divider $w={8} />
					<Tool aria-label='Help'><HelpIcon /></Tool>
					<Tool $w={12} aria-label='Help options'><Caret /></Tool>
					<WindowButtons>
						<Tool $w={17} aria-label='Minimize'><Ico w={12}><path d='M1 8h10' stroke='#2a2a2a' strokeWidth='2' /></Ico></Tool>
						<Tool $w={17} aria-label='Restore'><Ico w={12}><path d='M4 1.5h7v6M1 5.5h7v5H1zM4 1v4' stroke='#2a2a2a' strokeWidth='1.3' /></Ico></Tool>
						<Tool $w={17} aria-label='Close'><Ico w={12}><path d='M2 2l7 8M9 2l-7 8' stroke='#2a2a2a' strokeWidth='2' /></Ico></Tool>
					</WindowButtons>
				</TitleBar>
				<MenuBar>
					{menus.map(m => <MenuTab key={m} $active={m === menu} onClick={() => setMenu(m)}>{m}</MenuTab>)}
					<MenuEnd aria-label='Minimize ribbon'>
						<Ico w={13} h={8}><rect width='13' height='8' rx='2' fill='#e8e8e8' /><path d='M3.5 6h6l-3-4z' fill='#333' /></Ico>
						<Caret c='#eee' />
					</MenuEnd>
				</MenuBar>
			</div>
		</Header>

		<Ribbon>
			<Panel $w={79}>
				<PanelBody><Big w={78} icon={<SketchIcon />} label='Start' second='2D Sketch' side /></PanelBody>
				<PanelTitle>Sketch</PanelTitle>
			</Panel>
			<Panel $w={153}>
				<PanelBody $pad={1}>
					<Big w={47} icon={<ExtrudeIcon />} label='Extrude' />
					<Big w={46} icon={<RevolveIcon />} label='Revolve' />
					<Big w={55} icon={<SweepIcon />} label='Sweep' caret />
				</PanelBody>
				<PanelTitle>Create <Caret w={8} /></PanelTitle>
			</Panel>
			<Panel $w={266}>
				<PanelBody $pad={2}>
					<Big w={47} icon={<HoleIcon />} label='Hole' caret />
					<Big w={47} icon={<FilletIcon />} label='Fillet' caret />
					<Big w={47} icon={<ShellIcon />} label='Shell' caret />
					<Big w={71} icon={<CombineIcon />} label='Combine' caret />
					<Rule $l={5} $r={1} />
					<Big w={45} icon={<DirectIcon />} label='Direct' />
				</PanelBody>
				<PanelTitle>Modify <Caret w={8} /></PanelTitle>
			</Panel>
			<Panel $w={127}>
				<PanelBody $pad={4}>
					<Big w={47} icon={<PlaneIcon />} label='Plane' caret />
					<SmallTools $l={7}>
						<Small icon={<AxisIcon />} label='Axis' caret />
						<Small icon={<PointIcon />} label='Point' caret />
						<Small icon={<UcsIcon />} label='UCS' />
					</SmallTools>
				</PanelBody>
				<PanelTitle>Work Features</PanelTitle>
			</Panel>
			<Panel $w={99}>
				<PanelBody>
					<SmallTools $l={7}>
						<Small icon={<RectIcon />} label='Rectangular' />
						<Small icon={<CircIcon />} label='Circular' />
						<Small icon={<MirrorIcon />} label='Mirror' />
					</SmallTools>
				</PanelBody>
				<PanelTitle>Pattern</PanelTitle>
			</Panel>
			<Panel $w={78}>
				<PanelBody>
					<SmallTools $l={7}>
						<Small icon={<StitchIcon />} label='Stitch' />
						<Small icon={<PatchIcon />} label='Patch' caret />
						<Small icon={<TrimIcon />} label='Trim' />
					</SmallTools>
				</PanelBody>
				<PanelTitle>Surface <Caret w={8} /></PanelTitle>
			</Panel>
			<Panel $w={143}>
				<PanelBody>
					<Big w={45} icon={<BoxIcon />} label='Box' caret />
					<Rule $l={3} $r={2} />
					<Big w={56} icon={<EditFormIcon />} label='Edit' second='Form' off side />
					<Rule $l={3} $r={6} />
					<BoxedTool $w={24} $l={0} aria-label='Convert'><ConvertIcon /></BoxedTool>
				</PanelBody>
				<PanelTitle>Freeform</PanelTitle>
			</Panel>
			<Panel $w={40}>
				<PanelBody>
					<BoxedTool $w={34} $l={3} aria-label='More panels'><DownDisc /><Caret /></BoxedTool>
				</PanelBody>
				<PanelTitle />
			</Panel>
		</Ribbon>

		<Workspace>
			<Browser>
				<Grip>
					<span />
					<button aria-label='Close browser'><Ico w={9}><path d='M1.5 1.5l5 6M6.5 1.5l-5 6' stroke='#000' strokeWidth='1.7' /></Ico></button>
				</Grip>
				<BrowserHead>
					<h2>Model</h2><Caret c='#fff' w={8} />
					<button aria-label='Help'><Ico w={14} h={16}><path d='M1 1h12v12h-2v2l-3-2H1z' fill='#fff8c8' stroke='#111' strokeWidth='1.4' /><path d='M5 5c0-2.5 4.5-2.5 4 0-.3 1.2-2 1.3-2 3M7 9.500v2' stroke='#1a3ca8' strokeWidth='1.8' /></Ico></button>
				</BrowserHead>
				<BrowserTools>
					<button aria-label='Filter'><Ico><path d='M1.5 2.5h13L10 8v6H7V8z' fill='#888' stroke='#222' /><path d='M4 3.5l3.5 4v5' stroke='#ddd' /></Ico></button>
					<ToolRule />
					<button aria-label='Find'><Ico><path d='M3 2h3v2h4V2h3v3l3 5v5h-6v-4H6v4H0v-5l3-5z' fill='#0c0c0c' /><path d='M4 5v4M2 11v2M12 11v2M8 5v3' stroke='#fff' /></Ico></button>
				</BrowserTools>
				<Tree>
					<Node><PartIcon />scottrussel slider</Node>
					{nodes.map(([label, Icon], i) => (
						<Node key={label}><Branch last={i === nodes.length - 1} /><Icon />{label}</Node>
					))}
				</Tree>
			</Browser>

			<Stage>
				<Viewport>
					<Part />
					<Overlay $top={2} $right={0}>
						<Tool $w={20} aria-label='Minimize document'><Ico w={12}><path d='M1 8.5h10' stroke='#eee' strokeWidth='2.5' /></Ico></Tool>
						<Tool $w={20} aria-label='Restore document'><Ico w={12}><path d='M4 2.5V1h7v7H9.5' stroke='#eee' strokeWidth='1.5' /><path d='M1.5 3.5h7v7h-7zM4 6h2.5v2.5H4z' stroke='#eee' strokeWidth='1.5' /></Ico></Tool>
						<Tool $w={16} aria-label='Close document'><Ico w={12}><path d='M2 2l8 8M10 2l-8 8' stroke='#eee' strokeWidth='2.5' /></Ico></Tool>
					</Overlay>
					<Overlay $top={39} $right={15}><ViewCube /></Overlay>
					<NavBar><NavIcons /></NavBar>
				</Viewport>
				<DocTabs>
					<ViewButton aria-label='Cascade'><Ico><path d='M.5.5h10v8H.5zM3 4h10v8H3zM5.5 7.5h10v8h-10z' fill='#fff' stroke='#333' /><path d='M.5 1.5h10M3 5h10M5.5 8.5h10' stroke='#333' /></Ico></ViewButton>
					<ViewButton aria-label='Tile'><Ico><path d='M1.5 2.5h5v4h-5zM9.5 2.5h5v4h-5zM1.5 9.5h5v4h-5zM9.5 9.5h5v4h-5z' fill='#fff' stroke='#333' strokeWidth='1.4' /></Ico></ViewButton>
					<ViewButton aria-label='Open tabs'><Ico><path d='M3 8h10L8 3z' fill='#333' /></Ico></ViewButton>
					<Spacer $w={3} />
					{docs.map(([name, w]) => (
						<DocTab key={name} $w={w} $active={name === doc} onClick={() => setDoc(name)}>
							<span>{name}</span>
							{name === doc && <Ico w={9}><path d='M1 1h2l1.5 2L6 1h2v2L6 4.5 8 6v2H6L4.5 6 3 8H1V6l2-1.5L1 3z' stroke='#555' strokeWidth='.9' /></Ico>}
						</DocTab>
					))}
					<TabScroll aria-label='Scroll tabs'><Ico w={6} h={10}><path d='M0 0l6 5-6 5z' fill='#111' /></Ico></TabScroll>
				</DocTabs>
			</Stage>
		</Workspace>

		<StatusBar>
			<span>Ready</span>
			<StatusCell>1</StatusCell>
			<StatusCell>13</StatusCell>
		</StatusBar>
		<TaskBar>
			<StartButton aria-label='Start'><Orb /></StartButton>
			{taskItems.map(([label, Icon, open]) => (
				<TaskButton key={label} aria-label={label} $open={open} $active={label === 'Inventor'}><Icon /></TaskButton>
			))}
			<Tray>
				<TrayText $w={30} $up>ES</TrayText>
				<Tool aria-label='Hidden icons'><Ico w={8} h={5}><path d='M0 5h8L4 0z' fill='#f4f4f4' stroke='#444' strokeWidth='.5' /></Ico></Tool>
				<Tool aria-label='Network'><Ico><path d='M4.5 3.5h11v8h-11z' fill='#70859c' stroke='#fff' strokeWidth='1.4' /><path d='M10 12v2M6 15h8M2.5 6v9M1 2v3h3V2' stroke='#fff' strokeWidth='1.4' /></Ico></Tool>
				<Tool aria-label='Volume'><Ico><path d='M1 5.5h2.5L8 2v12l-4.5-3.5H1z' fill='#fff' stroke='#444' strokeWidth='.6' /><path d='M10 5q2 3 0 6M12 3q3.5 5 0 10' stroke='#fff' strokeWidth='1.2' /></Ico></Tool>
				<TrayText $w={75}>6:06 AM</TrayText>
				<ShowDesktop aria-label='Show desktop' />
			</Tray>
		</TaskBar>
	</Page>
}

export default App
